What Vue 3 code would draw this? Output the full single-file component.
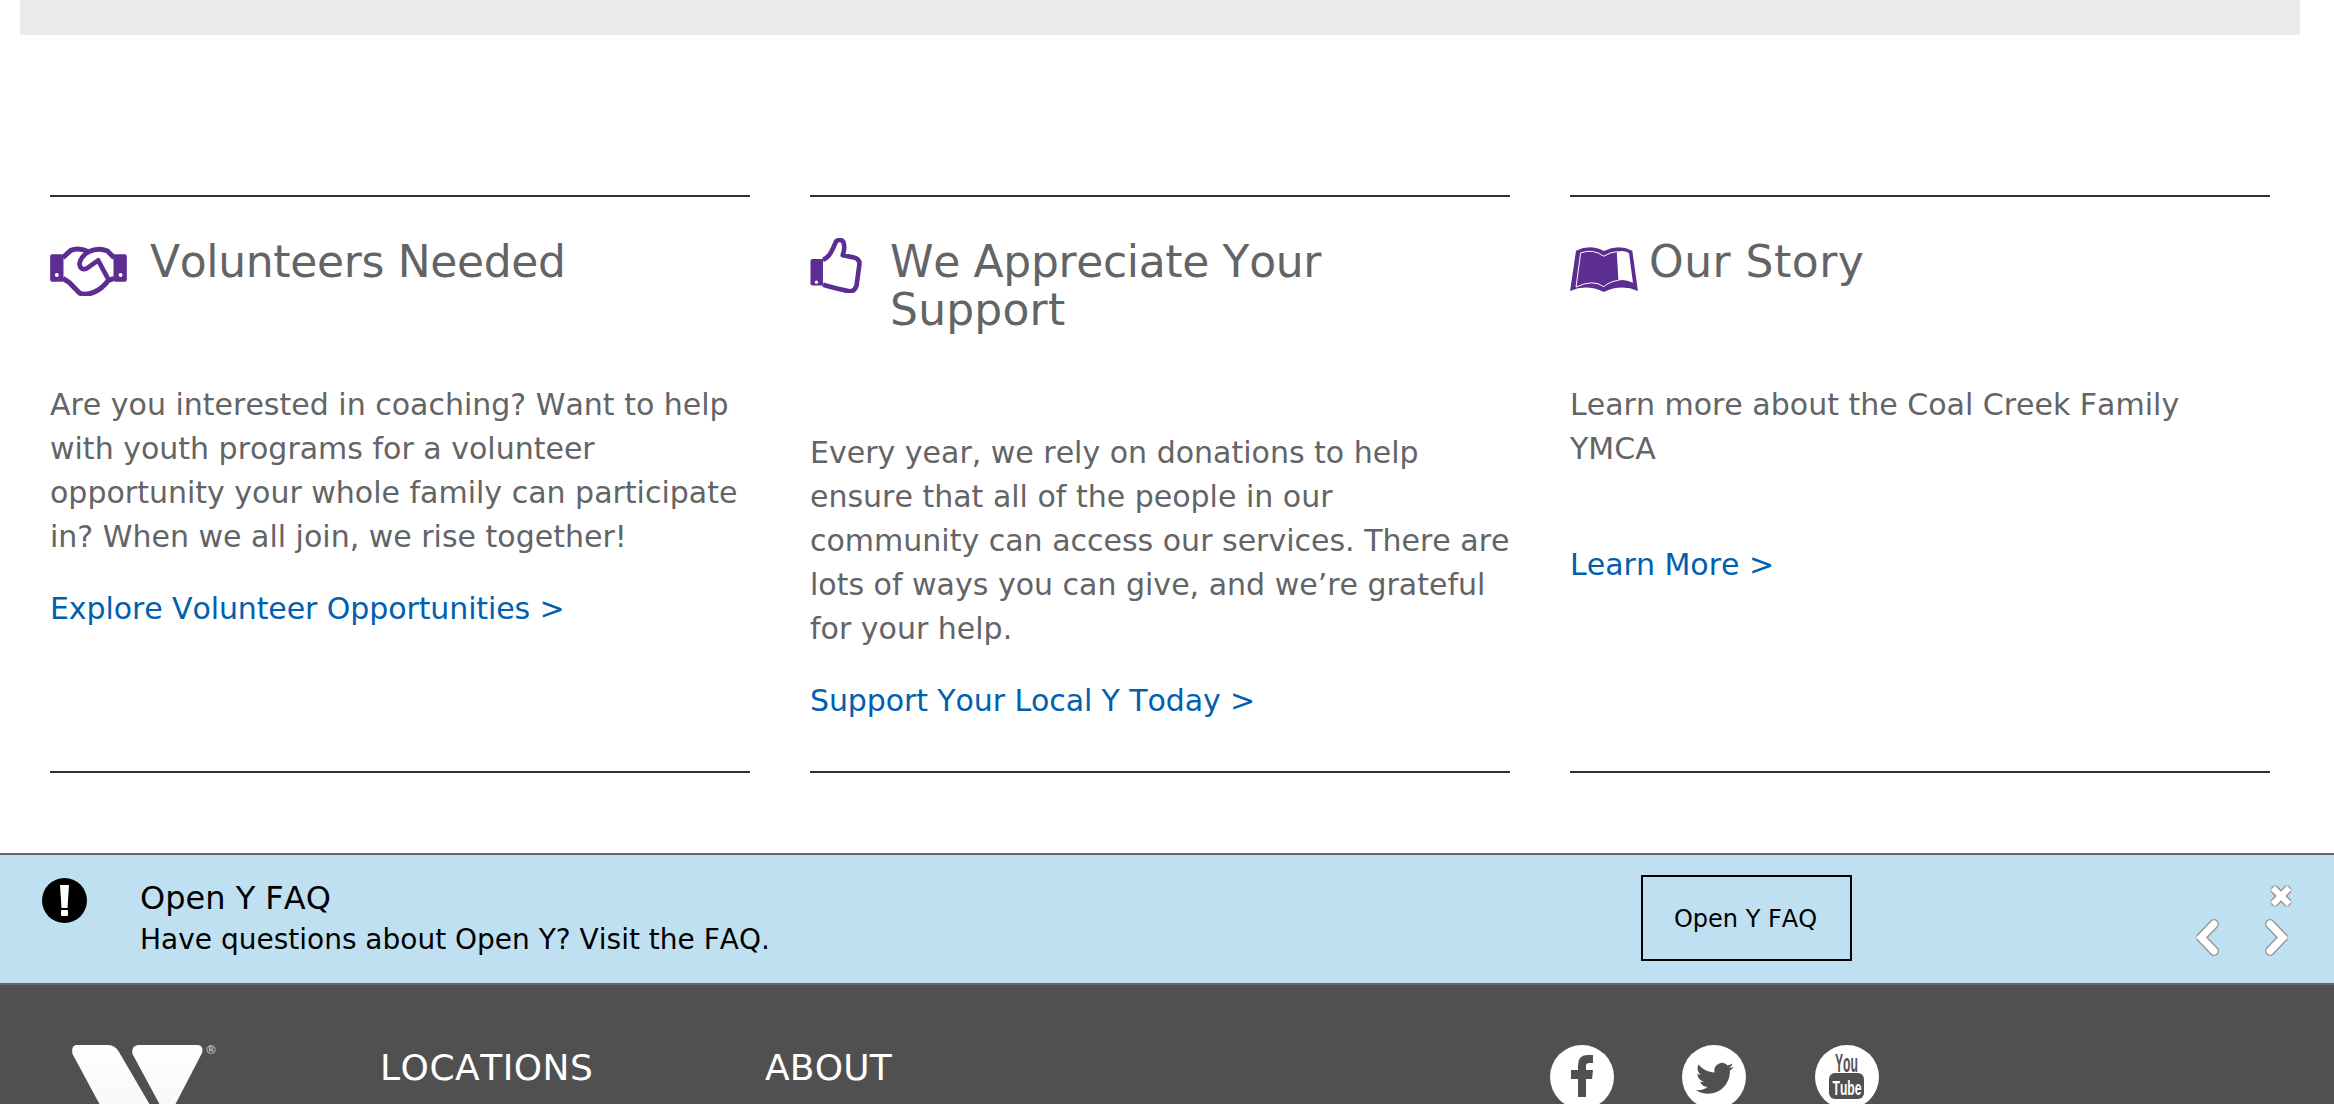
<script setup>
const twitter = "M23.953 4.57a10 10 0 01-2.825.775 4.958 4.958 0 002.163-2.723c-.951.555-2.005.959-3.127 1.184a4.92 4.92 0 00-8.384 4.482C7.69 8.095 4.067 6.13 1.64 3.162a4.822 4.822 0 00-.666 2.475c0 1.71.87 3.213 2.188 4.096a4.904 4.904 0 01-2.228-.616v.06a4.923 4.923 0 003.946 4.827 4.996 4.996 0 01-2.212.085 4.936 4.936 0 004.604 3.417 9.867 9.867 0 01-6.102 2.105c-.39 0-.779-.023-1.17-.067a13.995 13.995 0 007.557 2.209c9.053 0 13.998-7.496 13.998-13.985 0-.21 0-.42-.015-.63A9.935 9.935 0 0024 4.59z";
</script>

<template>
  <div class="page">
    <div class="topbar"></div>

    <section class="cards">
      <article class="col">
        <div class="card">
          <div class="head">
            <svg class="ico ico-hand" viewBox="60 75 230 150">
              <rect x="60" y="100" width="40" height="82" rx="6" fill="#5c2e91"/>
              <rect x="250" y="100" width="40" height="82" rx="6" fill="#5c2e91"/>
              <circle cx="80" cy="162" r="6" fill="#fff"/>
              <circle cx="271" cy="162" r="6" fill="#fff"/>
              <path d="M98 110 L122 88 Q145 78 175 92 Q205 78 232 90 L252 110 M98 172 L118 185 L148 216 Q165 224 190 214 Q215 205 235 178 L252 172" fill="none" stroke="#5c2e91" stroke-width="15" stroke-linejoin="round"/>
              <path d="M175 92 Q150 108 148 130 Q152 150 170 142 L204 118 L235 176" fill="none" stroke="#5c2e91" stroke-width="14" stroke-linejoin="round" stroke-linecap="round"/>
            </svg>
            <h2 class="t-vol">Volunteers Needed</h2>
          </div>
          <p>Are you interested in coaching? Want to help with youth programs for a volunteer opportunity your whole family can participate in? When we all join, we rise together!</p>
          <a class="more l-vol">Explore Volunteer Opportunities &gt;</a>
        </div>
      </article>

      <article class="col">
        <div class="card">
          <div class="head">
            <svg class="ico ico-thumb" viewBox="30 38 155 167">
              <path d="M36 102 H68 V182 H36 Q30 182 30 176 V108 Q30 102 36 102 Z" fill="#5c2e91"/>
              <circle cx="48" cy="172" r="5" fill="#fff"/>
              <path d="M68 104 Q86 98 98 70 L108 48 Q120 38 130 50 Q136 68 128 90 L162 97 Q182 102 178 122 L170 182 Q165 200 148 200 Q108 192 68 180" fill="none" stroke="#5c2e91" stroke-width="14" stroke-linejoin="round"/>
            </svg>
            <h2 class="t-vol">We Appreciate Your <span class="t-plain">Support</span></h2>
          </div>
          <p>Every year, we rely on donations to help ensure that all of the people in our community can access our services. There are lots of ways you can give, and we’re grateful for your help.</p>
          <a class="more l-sup">Support Your Local Y Today &gt;</a>
        </div>
      </article>

      <article class="col">
        <div class="card">
          <div class="head">
            <svg class="ico ico-book" viewBox="30 48 205 142">
              <path d="M48 65 Q92 44 132 66 Q175 44 218 65 L235 187 Q185 165 132 190 Q80 165 30 187 Z" fill="#5c2e91"/>
              <path d="M171 68 Q192 62 208 72 L220 162 Q196 150 176 155 Z" fill="#fff"/>
              <path d="M171 68 Q150 70 132 82 Q100 58 62 72 L48 175 Q100 150 132 174 Q150 158 176 155" fill="none" stroke="#fff" stroke-width="3"/>
            </svg>
            <h2 class="t-our">Our Story</h2>
          </div>
          <p class="short">Learn more about the Coal Creek Family YMCA</p>
          <a class="more">Learn More &gt;</a>
        </div>
      </article>
    </section>

    <section class="banner">
      <svg class="alert" viewBox="0 0 45 45">
        <circle cx="22.500" cy="22.500" r="22.500" fill="#000"/>
        <path d="M18 7 H27 L25.500 30 H19.500 Z" fill="#fff"/>
        <rect x="19" y="32" width="7" height="6" rx="1" fill="#fff"/>
      </svg>
      <div class="msg">
        <div class="msg-title">Open Y FAQ</div>
        <div class="msg-text">Have questions about Open Y? Visit the FAQ.</div>
      </div>
      <a class="btn">Open Y FAQ</a>

      <svg class="ctl ctl-x" viewBox="0 0 22 22">
        <path d="M5 5 L17 17 M17 5 L5 17" stroke="#999" stroke-width="9" stroke-linecap="round" fill="none"/>
        <path d="M5 5 L17 17 M17 5 L5 17" stroke="#fff" stroke-width="6" stroke-linecap="square" fill="none"/>
      </svg>
      <svg class="ctl ctl-prev" viewBox="0 0 23 37">
        <path d="M18 5 L5 18.500 L18 32" stroke="#999" stroke-width="10" stroke-linecap="round" stroke-linejoin="round" fill="none"/>
        <path d="M18 5 L5 18.500 L18 32" stroke="#fff" stroke-width="7" stroke-linecap="round" stroke-linejoin="miter" fill="none"/>
      </svg>
      <svg class="ctl ctl-next" viewBox="0 0 23 37">
        <path d="M5 5 L18 18.500 L5 32" stroke="#999" stroke-width="10" stroke-linecap="round" stroke-linejoin="round" fill="none"/>
        <path d="M5 5 L18 18.500 L5 32" stroke="#fff" stroke-width="7" stroke-linecap="round" stroke-linejoin="miter" fill="none"/>
      </svg>
    </section>

    <footer class="footer">
      <div class="logo">
        <svg class="logo-mark" viewBox="0 0 142 60">
          <defs>
            <linearGradient id="lg" x1="0" y1="0" x2="0" y2="1">
              <stop offset="0" stop-color="#fff"/>
              <stop offset="1" stop-color="#f8f8f8"/>
            </linearGradient>
          </defs>
          <path d="M4 0 H36 Q43 0 47 7 L78 60 H28 L0.500 9 Q-1 1 4 0 Z" fill="url(#lg)"/>
          <path d="M66 0 H125 Q132 0 130 8 L103 60 H88 L60.500 9 Q59 1 66 0 Z" fill="url(#lg)"/>
        </svg>
        <span class="reg">®</span>
      </div>
      <div class="nav nav-a">LOCATIONS</div>
      <div class="nav nav-b">ABOUT</div>
      <div class="social">
        <span class="sc">
          <svg viewBox="0 0 64 64"><path d="M36 52 V34 H42 L43 25 H36 V21 Q36 18 39 18 H43 V10 H37 Q28 10 28 21 V25 H21 V34 H28 V52 Z" fill="#505050"/></svg>
        </span>
        <span class="sc">
          <svg viewBox="-8.900 -9.200 40.700 40.700"><path :d="twitter" fill="#505050"/></svg>
        </span>
        <span class="sc">
          <svg viewBox="0 0 64 64">
            <text x="31.500" y="27" text-anchor="middle" font-family="Liberation Sans" font-weight="700" font-size="25" textLength="23" lengthAdjust="spacingAndGlyphs" fill="#505050">You</text>
            <rect x="14" y="28" width="35" height="26" rx="6" fill="#505050"/>
            <text x="32" y="50" text-anchor="middle" font-family="Liberation Sans" font-weight="700" font-size="21" textLength="29" lengthAdjust="spacingAndGlyphs" fill="#fff">Tube</text>
          </svg>
        </span>
      </div>
    </footer>
  </div>
</template>

<style>
html, body { margin: 0; overflow: hidden; background: #fff; }
</style>

<style scoped>
.page {
  width: 2334px;
  height: 1104px;
  overflow: hidden;
  font-family: "DejaVu Sans", sans-serif;
  font-kerning: none;
  background: #fff;
}
.topbar {
  height: 35px;
  margin: 0 34px 0 20px;
  background: #ebebeb;
}
.cards {
  display: grid;
  grid-template-columns: repeat(3, 760px);
  margin: 160px 0 0 20px;
}
.col { padding: 0 30px; display: flex; }
.card {
  flex: 1;
  height: 578px;
  box-sizing: border-box;
  border-top: 2px solid #333;
  border-bottom: 2px solid #333;
  padding-top: 41px;
}
.head { display: flex; align-items: flex-start; }
.ico { flex: none; display: block; margin-bottom: -20px; }
.ico-hand { width: 77px; height: 50px; margin-top: 8px; margin-right: 23px; }
.ico-thumb { width: 52px; height: 55px; margin-top: 0; margin-right: 28px; }
.ico-book { width: 68px; height: 47px; margin-top: 7px; margin-right: 11px; }
h2 {
  margin: 0;
  max-width: 580px;
  font-size: 44px;
  line-height: 48px;
  font-weight: 400;
  color: #636466;
}
.t-vol { letter-spacing: -0.340px; }
.t-plain { letter-spacing: 0.200px; }
.t-our { letter-spacing: 0.500px; }
p {
  margin: 97px 0 0;
  font-size: 30px;
  line-height: 44px;
  color: #636466;
}
p.short { padding-bottom: 44px; max-width: 680px; }
.more {
  display: block;
  margin-top: 28px;
  font-size: 30px;
  line-height: 44px;
  color: #0060af;
}
.l-vol { letter-spacing: -0.100px; }
.l-sup { letter-spacing: -0.100px; }
.banner {
  position: relative;
  display: flex;
  align-items: flex-start;
  height: 128px;
  margin-top: 80px;
  box-sizing: content-box;
  border-top: 2px solid #636466;
  border-bottom: 2px solid #636466;
  background: #bfe0f1;
  color: #000;
}
.alert { flex: none; width: 45px; height: 45px; margin: 23px 53px 0 42px; }
.msg { width: 1501px; flex: none; padding-top: 21px; }
.msg-title { font-size: 32px; line-height: 44px; }
.msg-text { font-size: 28px; line-height: 40px; }
.btn {
  flex: none;
  box-sizing: border-box;
  width: 211px;
  height: 86px;
  margin-top: 20px;
  padding: 2px 2px 0 0;
  border: 2px solid #000;
  display: flex;
  align-items: center;
  justify-content: center;
  font-size: 24px;
}
.ctl { position: absolute; display: block; }
.ctl-x { left: 2270px; top: 30px; width: 22px; height: 22px; }
.ctl-prev { left: 2196px; top: 64px; width: 23px; height: 37px; }
.ctl-next { left: 2265px; top: 64px; width: 23px; height: 37px; }
.footer {
  display: flex;
  align-items: flex-start;
  height: 122px;
  background: #505050;
  color: #fff;
  padding: 60px 0 0 72px;
  box-sizing: border-box;
}
.logo { position: relative; flex: none; width: 308px; }
.logo-mark { display: block; width: 142px; height: 60px; }
.reg {
  position: absolute;
  left: 133px;
  top: -2px;
  font-size: 12px;
  line-height: 14px;
  color: #ddd;
}
.nav { flex: none; font-size: 36px; line-height: 44px; margin-top: 1px; }
.nav-a { width: 385px; letter-spacing: 0.500px; }
.nav-b { width: 785px; letter-spacing: 0.200px; }
.social { display: flex; gap: 68.400px; }
.sc {
  width: 64px;
  height: 64px;
  border-radius: 50%;
  background: #fff;
  display: block;
}
.sc svg { display: block; width: 64px; height: 64px; overflow: visible; }
</style>
